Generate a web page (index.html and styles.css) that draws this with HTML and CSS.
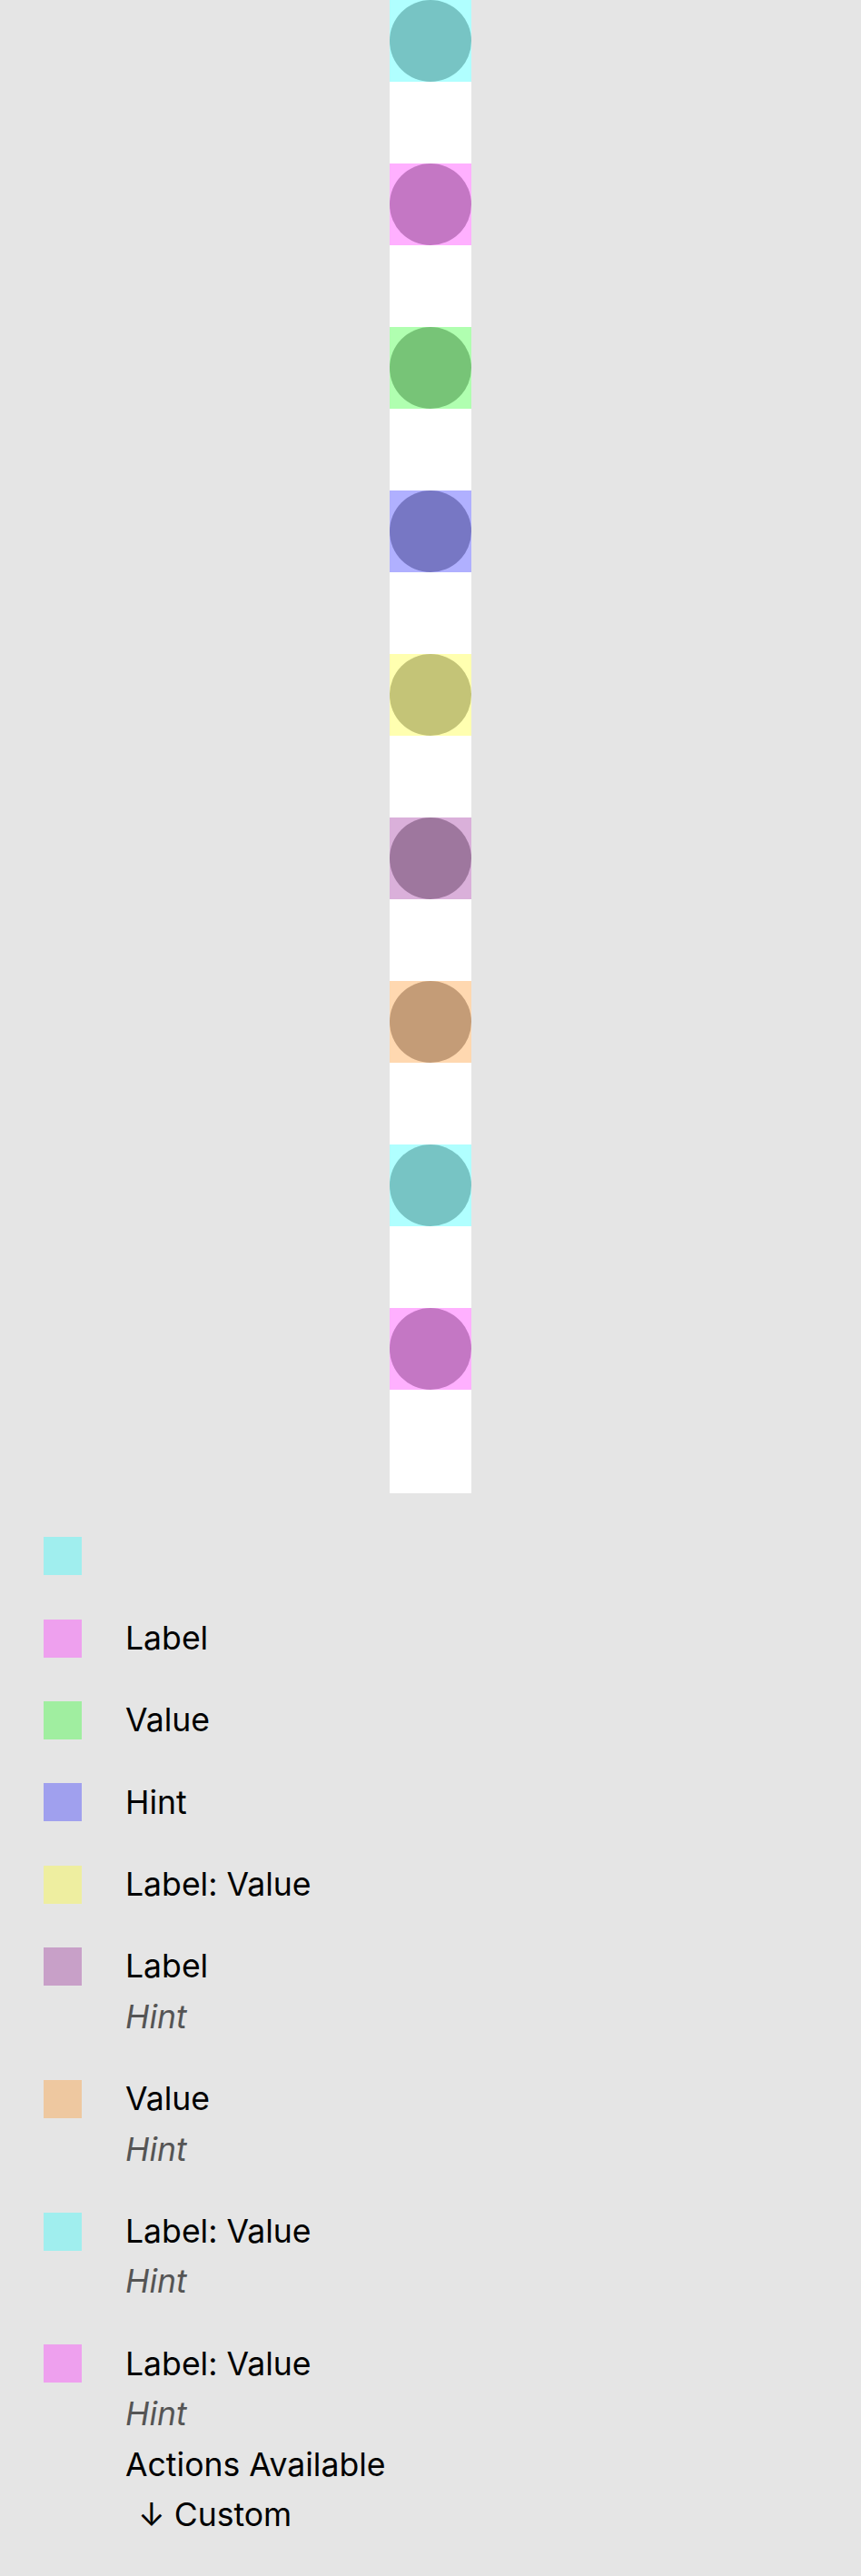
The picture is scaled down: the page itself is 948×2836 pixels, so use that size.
FILE: index.html
```html
<!DOCTYPE html>
<html>
<head>
<meta charset="utf-8">
<link rel="stylesheet" href="styles.css">
</head>
<body>
<div class="column">
  <div class="cell"><div class="box c1"><div class="dot d1"></div></div></div>
  <div class="cell"><div class="box c2"><div class="dot d2"></div></div></div>
  <div class="cell"><div class="box c3"><div class="dot d3"></div></div></div>
  <div class="cell"><div class="box c4"><div class="dot d4"></div></div></div>
  <div class="cell"><div class="box c5"><div class="dot d5"></div></div></div>
  <div class="cell"><div class="box c6"><div class="dot d6"></div></div></div>
  <div class="cell"><div class="box c7"><div class="dot d7"></div></div></div>
  <div class="cell"><div class="box c1"><div class="dot d1"></div></div></div>
  <div class="cell"><div class="box c2"><div class="dot d2"></div></div></div>
</div>
<div class="legend">
  <div class="item"><div class="swatch s1"></div><div class="text"><div class="line"></div></div></div>
  <div class="item"><div class="swatch s2"></div><div class="text"><div class="line">Label</div></div></div>
  <div class="item"><div class="swatch s3"></div><div class="text"><div class="line">Value</div></div></div>
  <div class="item"><div class="swatch s4"></div><div class="text"><div class="line">Hint</div></div></div>
  <div class="item"><div class="swatch s5"></div><div class="text"><div class="line">Label: Value</div></div></div>
  <div class="item"><div class="swatch s6"></div><div class="text"><div class="line">Label</div><div class="line hint">Hint</div></div></div>
  <div class="item"><div class="swatch s7"></div><div class="text"><div class="line">Value</div><div class="line hint">Hint</div></div></div>
  <div class="item"><div class="swatch s1"></div><div class="text"><div class="line">Label: Value</div><div class="line hint">Hint</div></div></div>
  <div class="item"><div class="swatch s2"></div><div class="text"><div class="line">Label: Value</div><div class="line hint">Hint</div><div class="line">Actions Available</div><div class="line action">↓ Custom</div></div></div>
</div>
</body>
</html>
```

FILE: styles.css
```css
html, body {
  margin: 0;
  padding: 0;
  background: #e5e5e5;
}
body {
  font-family: Inter, "Liberation Sans", sans-serif;
  color: #000;
}
.column {
  width: 90px;
  margin: 0 auto;
  background: #ffffff;
  padding-bottom: 24px;
  display: flex;
  flex-direction: column;
}
.cell {
  height: 180px;
}
.box {
  width: 90px;
  height: 90px;
}
.dot {
  width: 90px;
  height: 90px;
  border-radius: 50%;
}
.c1 { background: #b0ffff; }
.c2 { background: #ffb0ff; }
.c3 { background: #b0ffb0; }
.c4 { background: #b0b0ff; }
.c5 { background: #ffffb0; }
.c6 { background: #dab0da; }
.c7 { background: #ffd8b0; }
.d1 { background: #77c4c4; }
.d2 { background: #c477c4; }
.d3 { background: #77c477; }
.d4 { background: #7777c4; }
.d5 { background: #c4c477; }
.d6 { background: #9e779e; }
.d7 { background: #c49c77; }
.legend {
  padding: 41.5px 0 0 48px;
  display: flex;
  flex-direction: column;
  gap: 35px;
}
.item {
  display: flex;
  align-items: flex-start;
  gap: 48px;
}
.swatch {
  width: 42px;
  height: 42px;
  margin-top: 6.7px;
  flex: none;
}
.s1 { background: #a0eeee; }
.s2 { background: #eea0ee; }
.s3 { background: #a0eea0; }
.s4 { background: #a0a0ee; }
.s5 { background: #eeeea0; }
.s6 { background: #c8a0c8; }
.s7 { background: #eec8a0; }
.text {
  display: flex;
  flex-direction: column;
}
.line {
  font-size: 35.6px;
  line-height: 55.4px;
  height: 55.4px;
  white-space: pre;
}
.hint {
  font-style: italic;
  color: #555555;
}
.action {
  padding-left: 14px;
}
```
